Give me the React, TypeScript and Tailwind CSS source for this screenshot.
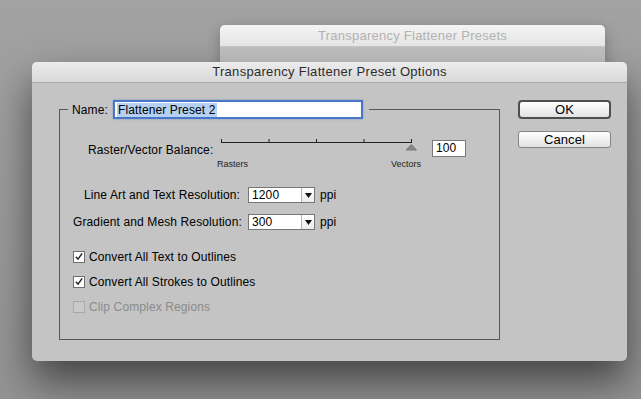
import React from "react";

function Checkbox({ checked, disabled }: { checked?: boolean; disabled?: boolean }) {
  return (
    <div
      className={`w-[12px] h-[12px] border flex items-center justify-center ${
        disabled ? "border-[#a9a9a9] bg-[#c9c9c9]" : "border-[#6f6f6f] bg-white"
      }`}
    >
      {checked && (
        <svg width="12" height="12" viewBox="0 0 12 12">
          <path d="M2.2 5.8 L4.8 8.6 L9.8 1.6" fill="none" stroke="#1e1e1e" strokeWidth="1.7" />
        </svg>
      )}
    </div>
  );
}

function Select({ value }: { value: string }) {
  return (
    <div className="ml-[8px] w-[67px] h-[16px] border border-[#767676] bg-white flex">
      <span className="flex-1 pl-[3px] leading-[14px]">{value}</span>
      <div className="w-[13px] border-l border-[#b5b5b5] bg-gradient-to-b from-white to-[#ececec] flex items-center justify-center">
        <svg width="7" height="5" viewBox="0 0 7 5">
          <path d="M0 0 H7 L3.5 5 Z" fill="#111" />
        </svg>
      </div>
    </div>
  );
}

function Slider() {
  const ticks = [4, 51.5, 99, 146.5, 194];
  return (
    <div className="w-[207px]">
      <svg width="207" height="14" viewBox="0 0 207 14">
        <line x1="4" y1="5.5" x2="194" y2="5.5" stroke="#222" strokeWidth="1" />
        {ticks.map((t) => (
          <line key={t} x1={t + 0.5} y1="2" x2={t + 0.5} y2="6" stroke="#222" strokeWidth="1" />
        ))}
        <path d="M189 13 L199.5 13 L194.5 7.5 Z" fill="#8a8a8a" stroke="#707070" strokeWidth="0.8" />
      </svg>
      <div className="flex justify-between pr-[3px] mt-[8px] text-[9px] leading-[10px] tracking-normal text-[#222]">
        <span>Rasters</span>
        <span>Vectors</span>
      </div>
    </div>
  );
}

export default function App() {
  return (
    <div className="relative w-[641px] h-[399px] overflow-hidden bg-gradient-to-b from-[#a2a2a2] to-[#939393] font-['Liberation_Sans',Arial,sans-serif] text-[12px] tracking-[0.12px] text-black">
      {/* window behind */}
      <div className="absolute left-[220px] top-[25px] w-[385px] h-[60px] rounded-t-[5px] bg-[#c1c1c1] shadow-[0_4px_14px_rgba(0,0,0,0.25)] overflow-hidden">
        <div className="h-[22px] bg-gradient-to-b from-[#f3f3f3] to-[#e8e8e8] border-b border-[#c9c9c9] flex items-center justify-center text-[13px] tracking-[0.25px] text-[#b3b3b3]">
          Transparency Flattener Presets
        </div>
      </div>

      {/* dialog */}
      <div className="absolute left-[32px] top-[62px] w-[595px] h-[299px] rounded-[5px] bg-[#c4c4c4] shadow-[0_20px_40px_rgba(0,0,0,0.55)] overflow-hidden flex flex-col">
        <div className="h-[21px] shrink-0 bg-gradient-to-b from-[#ececec] to-[#d8d8d8] border-b border-[#aaaaaa] flex items-center justify-center text-[13px] tracking-[0.3px] text-[#2c2c2c]">
          Transparency Flattener Preset Options
        </div>

        <div className="flex pl-[27px] pt-[17px] pr-[16px] gap-[18px]">
          <fieldset className="w-[441px] border border-[#585858] pl-[13px] pt-[18px] pb-[25px]">
            <legend className="ml-[-5px] px-[4px] pr-[6px]">
              <div className="flex items-center">
                <span>Name:</span>
                <div className="ml-[5px] w-[250px] h-[19px] border-2 border-[#4a76c8] bg-white flex items-center pl-[2px] shadow-[0_0_2px_rgba(70,120,210,0.6)]">
                  <span className="bg-[#b5d0f2] px-[1px] leading-[14px]">Flattener Preset 2</span>
                </div>
              </div>
            </legend>

            <div className="flex h-[50px]">
              <span className="w-[144px] pl-[15px] mt-[6px] leading-[14px] whitespace-nowrap">
                Raster/Vector Balance:
              </span>
              <Slider />
              <div className="ml-[8px] mt-[3px] w-[34px] h-[17px] border border-[#7a7a7a] bg-white pl-[3px] leading-[15px]">
                100
              </div>
            </div>

            <div className="flex items-center h-[16px]">
              <span className="w-[167px] text-right whitespace-nowrap">Line Art and Text Resolution:</span>
              <Select value="1200" />
              <span className="ml-[5px]">ppi</span>
            </div>
            <div className="flex items-center h-[16px] mt-[11px]">
              <span className="w-[167px] text-right whitespace-nowrap">Gradient and Mesh Resolution:</span>
              <Select value="300" />
              <span className="ml-[5px]">ppi</span>
            </div>

            <div className="flex items-center h-[14px] mt-[20px]">
              <Checkbox checked />
              <span className="ml-[4px]">Convert All Text to Outlines</span>
            </div>
            <div className="flex items-center h-[14px] mt-[11px]">
              <Checkbox checked />
              <span className="ml-[4px]">Convert All Strokes to Outlines</span>
            </div>
            <div className="flex items-center h-[14px] mt-[11px]">
              <Checkbox disabled />
              <span className="ml-[4px] text-[#8b8b8b]">Clip Complex Regions</span>
            </div>
          </fieldset>

          <div className="flex flex-col w-[93px]">
            <button className="h-[19px] border-2 border-[#4e4e4e] rounded-[4px] bg-gradient-to-b from-white to-[#e2e2e2] text-[13px] leading-none">
              OK
            </button>
            <button className="mt-[12px] h-[17px] border border-[#858585] rounded-[3px] bg-gradient-to-b from-white to-[#e2e2e2] text-[13px] leading-none">
              Cancel
            </button>
          </div>
        </div>
      </div>
    </div>
  );
}
